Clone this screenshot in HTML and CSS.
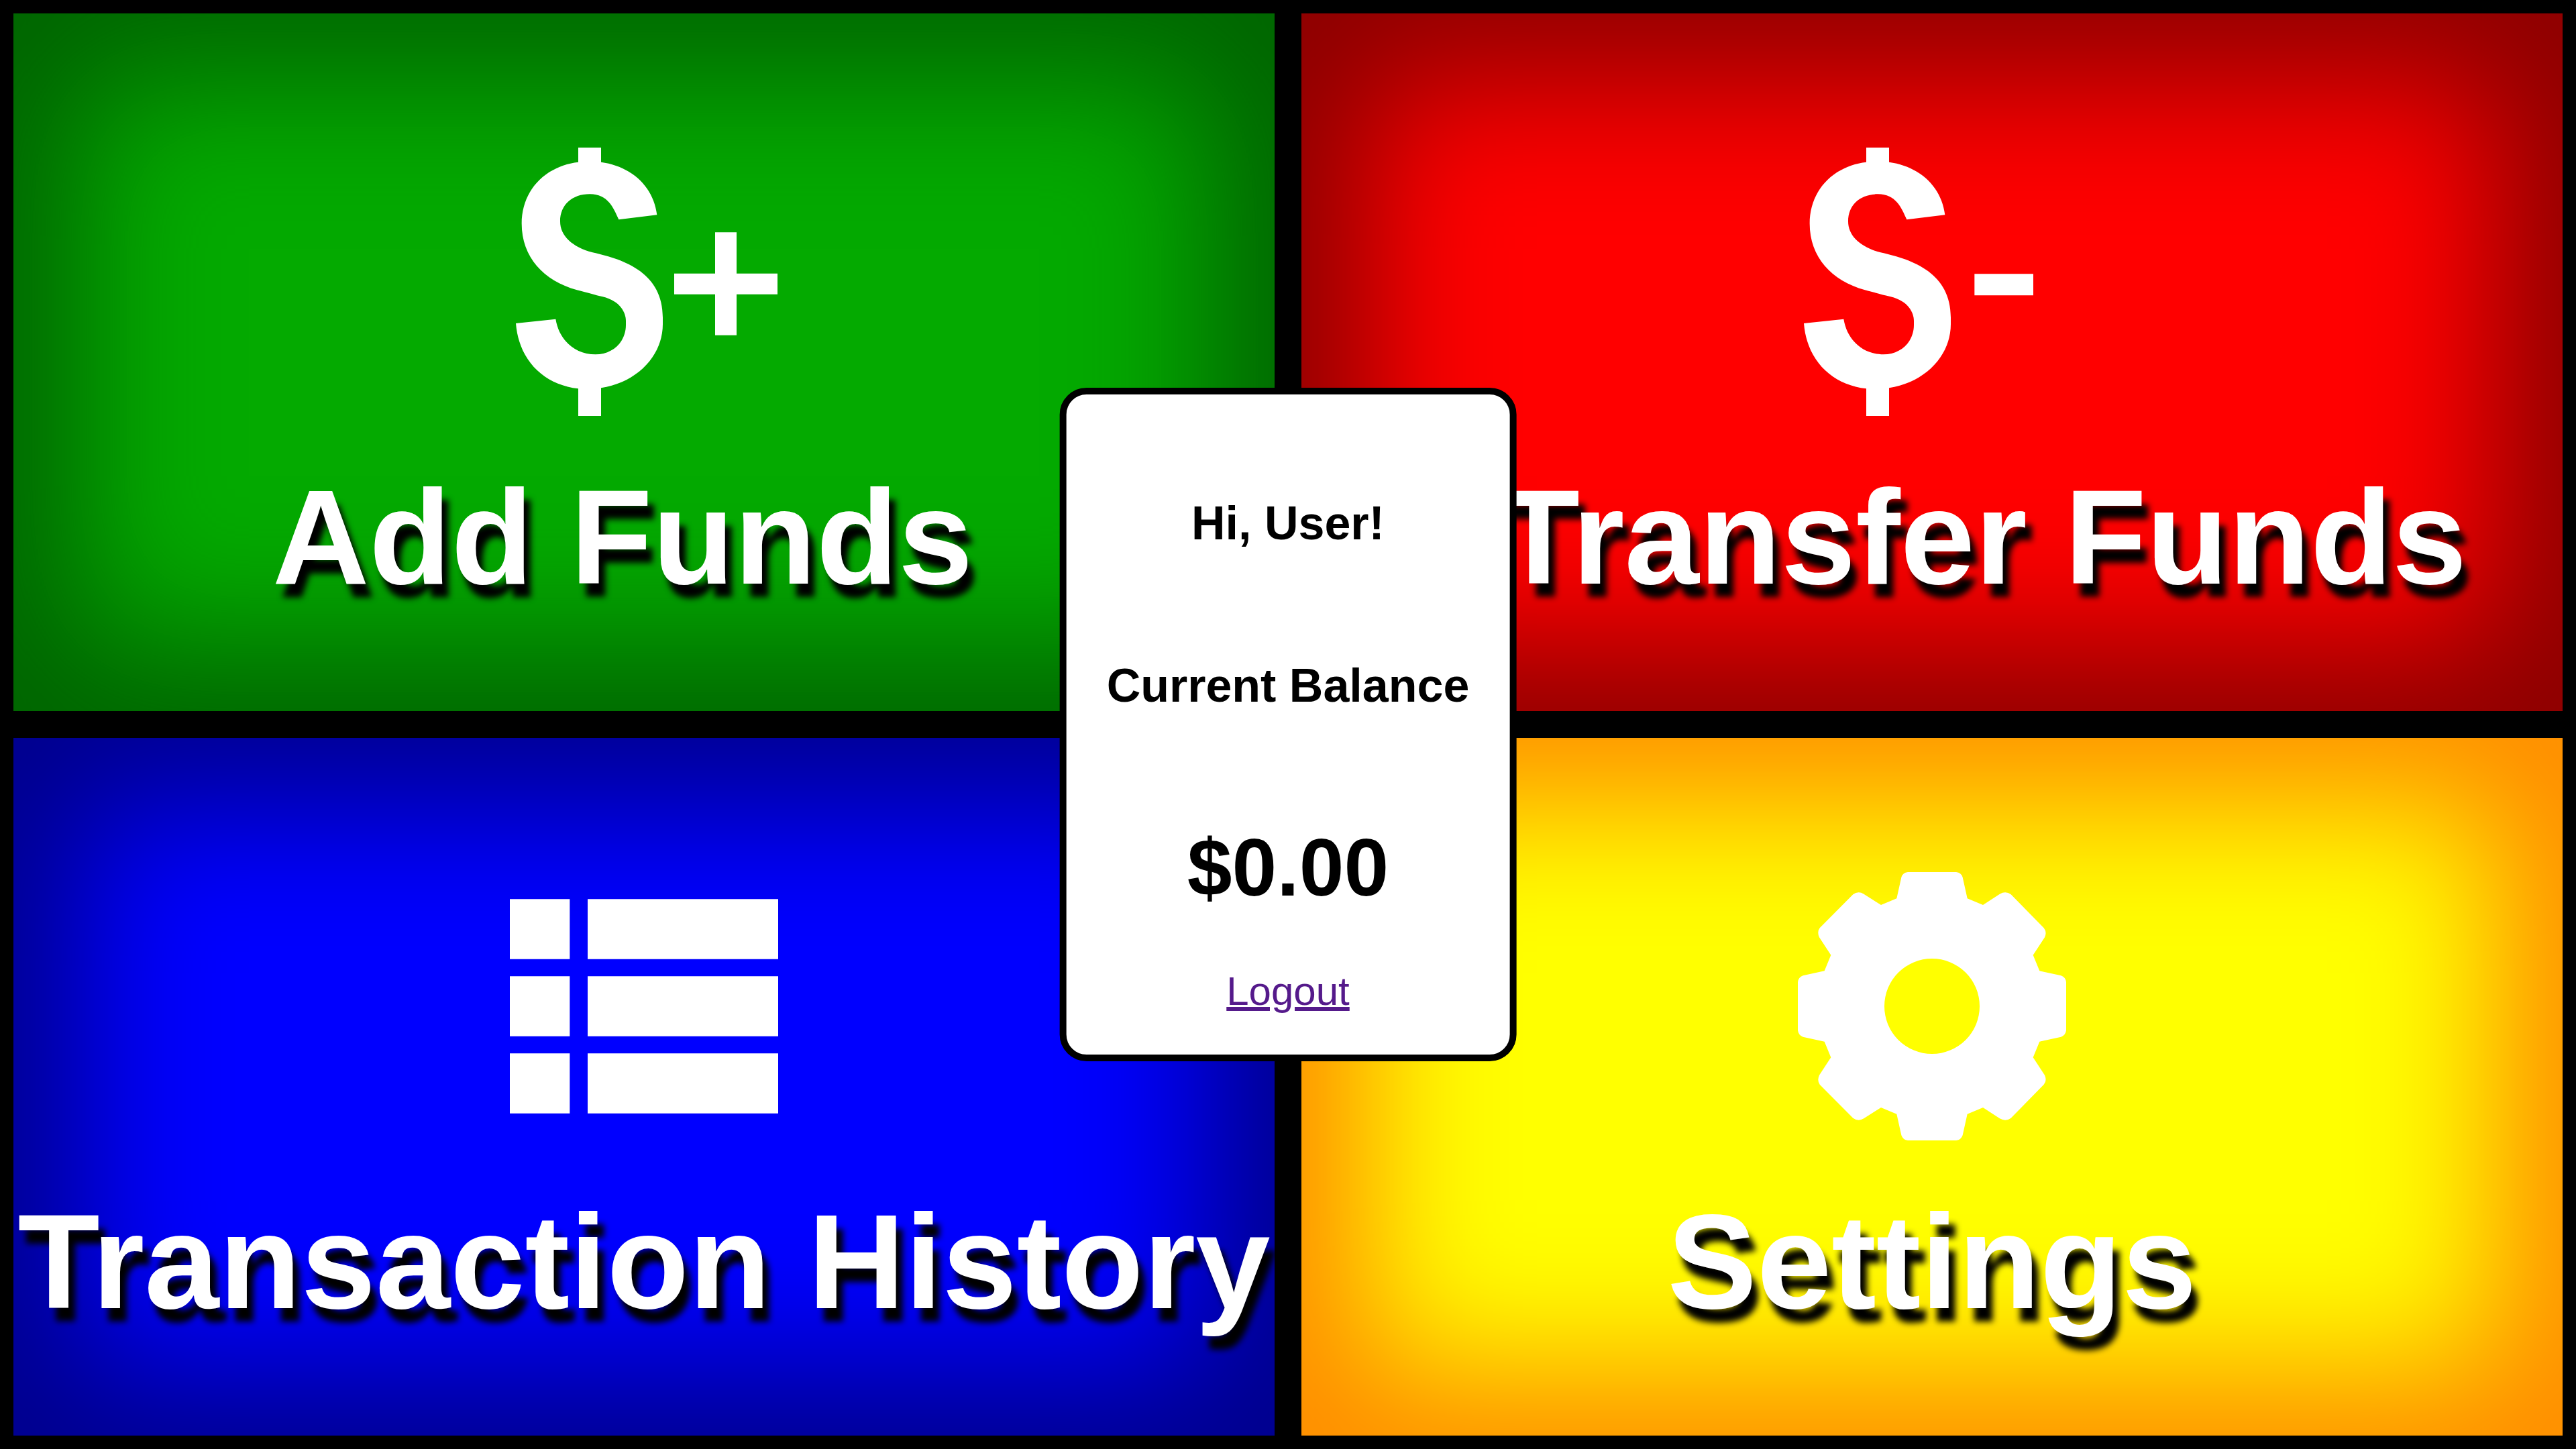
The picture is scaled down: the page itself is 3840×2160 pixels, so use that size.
FILE: index.html
```html
<!DOCTYPE html>
<html lang="en">
<head>
  <meta charset="utf-8">
  <meta name="viewport" content="width=device-width, initial-scale=1">
  <title>Account</title>
  <link rel="stylesheet" href="styles.css">
</head>
<body>
  <nav class="tiles" aria-label="Account actions">
    <a class="tile tile-add" href="#add">
      <svg class="tile-icon" viewBox="180 120 1200 1200" aria-hidden="true">
        <path d="M486 120H588V185C718 202 822 290 838 421L667 442C643 388 618 328 538 328C460 328 405 375 405 450C405 515 460 565 550 589C700 622 864 684 864 880V910C864 1050 750 1170 588 1195V1320H486V1198C330 1180 220 1070 207 906L385 887C400 980 470 1045 563 1045C640 1045 699 990 699 913V895C699 860 675 806 595 787C560 779 530 770 480 757C330 715 233 610 233 460C233 310 340 202 486 185Z"/>
        <path d="M1098 499h96v184h183v93h-183v183h-96v-183h-183v-93h183z"/>
      </svg>
      <span class="tile-title title-start">Add Funds</span>
    </a>
    <a class="tile tile-transfer" href="#transfer">
      <svg class="tile-icon" viewBox="180 120 1200 1200" aria-hidden="true">
        <path d="M486 120H588V185C718 202 822 290 838 421L667 442C643 388 618 328 538 328C460 328 405 375 405 450C405 515 460 565 550 589C700 622 864 684 864 880V910C864 1050 750 1170 588 1195V1320H486V1198C330 1180 220 1070 207 906L385 887C400 980 470 1045 563 1045C640 1045 699 990 699 913V895C699 860 675 806 595 787C560 779 530 770 480 757C330 715 233 610 233 460C233 310 340 202 486 185Z"/>
        <path d="M970 685h263v96h-263z"/>
      </svg>
      <span class="tile-title title-end">Transfer Funds</span>
    </a>
    <a class="tile tile-history" href="#history">
      <svg class="tile-icon" viewBox="0 0 1200 1200" aria-hidden="true">
        <path d="M0 121h268v268H0zM348 121h852v268H348zM0 466h268v268H0zM348 466h852v268H348zM0 811h268v268H0zM348 811h852v268H348z"/>
      </svg>
      <span class="tile-title">Transaction History</span>
    </a>
    <a class="tile tile-settings" href="#settings">
      <svg class="tile-icon" viewBox="120 120 1200 1200" aria-hidden="true">
        <path fill-rule="evenodd" d="M612 120H828Q850 122 857 143L878 238L948 267L1023 218Q1050 203 1073 220L1220 370Q1235 388 1224 412L1172 491L1201 562L1297 583Q1317 590 1320 612V828Q1317 850 1297 857L1201 878L1172 949L1224 1028Q1235 1052 1220 1070L1073 1220Q1050 1237 1023 1222L948 1173L878 1202L857 1297Q850 1318 828 1320H612Q590 1318 583 1297L562 1202L492 1173L415 1222Q390 1237 367 1220L218 1070Q205 1052 216 1028L268 949L239 878L143 857Q123 850 120 828V612Q123 590 143 583L239 562L268 491L216 412Q205 388 218 370L367 220Q390 203 415 218L492 267L562 238L583 143Q590 122 612 120ZM720 507A213 213 0 1 0 720 933A213 213 0 1 0 720 507Z"/>
      </svg>
      <span class="tile-title">Settings</span>
    </a>
  </nav>

  <main class="balance">
    <h2 class="balance-text">Hi, User!</h2>
    <h2 class="balance-text">Current Balance</h2>
    <p class="balance-amount">$0.00</p>
    <a class="balance-logout" href="#logout">Logout</a>
  </main>
</body>
</html>
```
FILE: styles.css
```css
* {
  box-sizing: border-box;
}

body {
  margin: 0;
  background: #000;
  font-family: "Liberation Sans", Arial, Helvetica, sans-serif;
}

.tiles {
  display: grid;
  grid-template-columns: repeat(2, minmax(0, 1fr));
  grid-auto-rows: 1fr;
  min-height: 100vh;
}

.tile {
  display: flex;
  flex-direction: column;
  align-items: center;
  gap: 66px;
  padding-top: 200px;
  border: 20px solid #000;
  color: #fff;
  text-decoration: none;
}

.tile-add {
  background: #04aa00;
  box-shadow: inset 0 0 210px 100px darkgreen;
}

.tile-transfer {
  background: red;
  box-shadow: inset 0 0 210px 100px darkred;
}

.tile-history {
  background: blue;
  box-shadow: inset 0 0 210px 100px darkblue;
}

.tile-settings {
  background: yellow;
  box-shadow: inset 0 0 210px 100px darkorange;
}

.tile-icon {
  width: 400px;
  height: 400px;
  fill: currentColor;
}

.tile-title {
  font-size: 200px;
  font-weight: bold;
  line-height: 230px;
  white-space: nowrap;
  text-shadow: 10px 20px 10px #000;
}

/* The top titles lean to the left or right of their tile's centre. */
.title-start {
  padding-right: 64px;
}

.title-end {
  padding-left: 150px;
}

.balance {
  position: fixed;
  top: 50%;
  left: 50%;
  display: flex;
  flex-direction: column;
  align-items: center;
  padding: 152px 60px 60px;
  border: 10px solid #000;
  border-radius: 40px;
  background: #fff;
  color: #000;
  transform: translate(-50%, -50%);
}

.balance-text {
  margin: 0 0 162px;
  font-size: 70px;
  line-height: 80px;
  white-space: nowrap;
}

.balance-amount {
  margin: 0 0 82px;
  font-size: 120px;
  font-weight: bold;
  line-height: 138px;
}

.balance-logout {
  color: #551a8b;
  font-size: 60px;
  line-height: 68px;
}
```
